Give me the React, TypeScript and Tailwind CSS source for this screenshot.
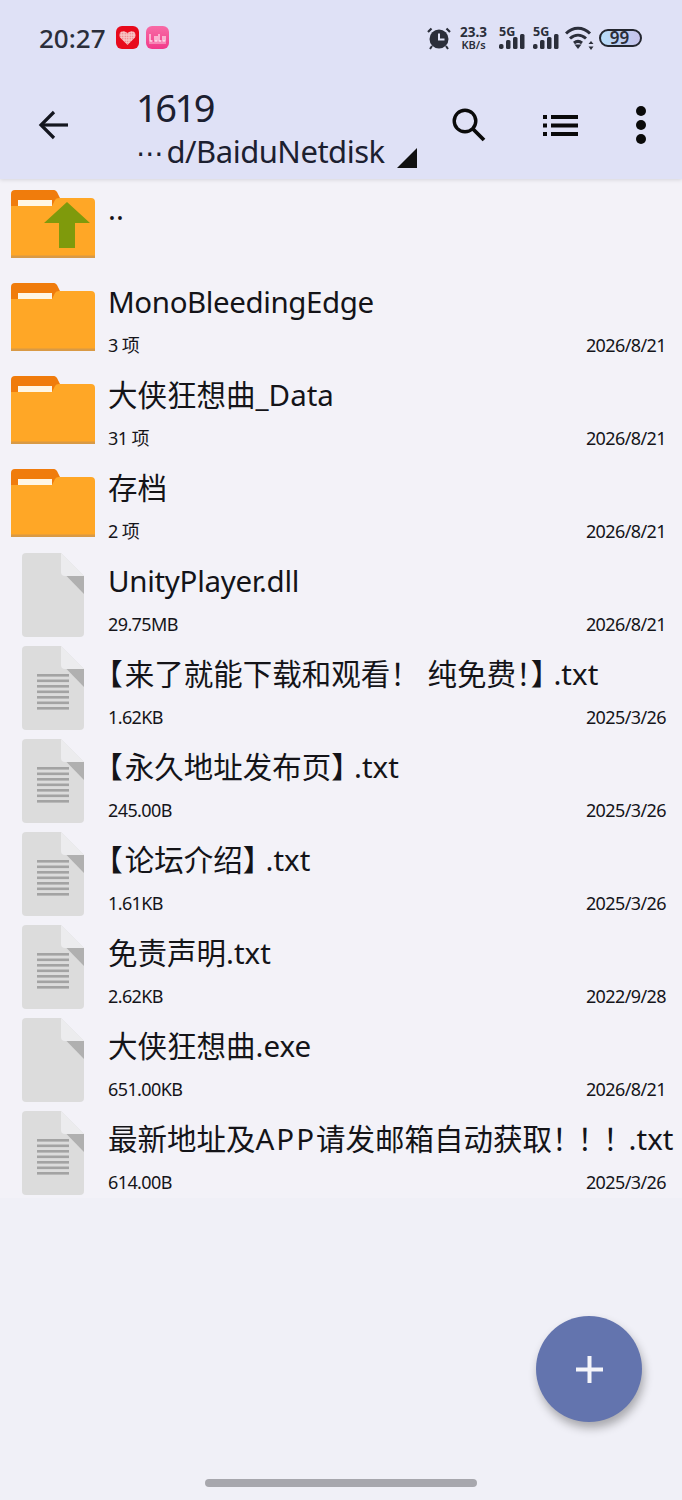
import type { ReactNode } from "react";

type Kind = "up" | "folder" | "blank" | "text";
type Row = { kind: Kind; name: ReactNode; info?: string; date?: string };

// half-width punctuation, the phone's font trims these
function Open() {
  return <span className="mr-[2px] [font-feature-settings:'halt']">【</span>;
}

function Close() {
  return <span className="mr-[8px] [font-feature-settings:'halt']">】</span>;
}

const rows: Row[] = [
  { kind: "up", name: ".." },
  {
    kind: "folder",
    name: <span className="tracking-[-0.4px]">MonoBleedingEdge</span>,
    info: "3 项",
    date: "2026/8/21",
  },
  { kind: "folder", name: "大侠狂想曲_Data", info: "31 项", date: "2026/8/21" },
  { kind: "folder", name: "存档", info: "2 项", date: "2026/8/21" },
  {
    kind: "blank",
    name: <span className="tracking-[-0.3px]">UnityPlayer.dll</span>,
    info: "29.75MB",
    date: "2026/8/21",
  },
  {
    kind: "text",
    name: (
      <>
        <Open />来了就能下载和观看！ 纯免费<span className="[font-feature-settings:'halt']">！</span><Close />.txt
      </>
    ),
    info: "1.62KB",
    date: "2025/3/26",
  },
  {
    kind: "text",
    name: (
      <>
        <Open />永久地址发布页<Close />.txt
      </>
    ),
    info: "245.00B",
    date: "2025/3/26",
  },
  {
    kind: "text",
    name: (
      <>
        <Open />论坛介绍<Close />.txt
      </>
    ),
    info: "1.61KB",
    date: "2025/3/26",
  },
  { kind: "text", name: "免责声明.txt", info: "2.62KB", date: "2022/9/28" },
  { kind: "blank", name: "大侠狂想曲.exe", info: "651.00KB", date: "2026/8/21" },
  {
    kind: "text",
    name: (
      <>
        最新地址及<span className="tracking-[2px]">APP</span>请发邮箱自动获取<span className="tracking-[-4px]">！！！</span>.txt
      </>
    ),
    info: "614.00B",
    date: "2025/3/26",
  },
];

function FolderIcon({ up }: { up?: boolean }) {
  return (
    <svg width="84" height="68" viewBox="0 0 84 68">
      <path d="M0 4a4 4 0 0 1 4-4h38a4 4 0 0 1 4 2l3 6v10H0z" fill="#f07c0c" />
      <rect x="7" y="10" width="34" height="6" fill="#fff6e4" />
      <path d="M0 68V16h41l3-6q1-2 4-2h32a4 4 0 0 1 4 4v56z" fill="#ffa726" />
      <rect x="0" y="65.500" width="84" height="2.500" fill="#d99a45" />
      {up && <path d="M56 12l23 21H64v25H48V33H33z" fill="#7f9a0c" />}
    </svg>
  );
}

function FileIcon({ lines }: { lines?: boolean }) {
  return (
    <svg width="62" height="84" viewBox="0 0 62 84">
      <path d="M4 0h35l23 23v57a4 4 0 0 1-4 4H4a4 4 0 0 1-4-4V4a4 4 0 0 1 4-4z" fill="#dcdcdc" />
      <path d="M39 0l23 23H43a4 4 0 0 1-4-4z" fill="#ececee" />
      <path d="M44.500 23H62v18z" fill="#b0b0b0" />
      {lines && (
        <g fill="#a3a3a3">
          <rect x="15" y="28" width="32" height="2.600" />
          <rect x="15" y="33.500" width="32" height="2.600" />
          <rect x="15" y="39" width="32" height="2.600" />
          <rect x="15" y="44.500" width="32" height="2.600" />
          <rect x="15" y="50" width="32" height="2.600" />
          <rect x="15" y="55.500" width="32" height="2.600" />
          <rect x="15" y="61" width="32" height="2.600" />
        </g>
      )}
    </svg>
  );
}

function Signal() {
  return (
    <div className="relative h-[22px] w-[26px]">
      <span className="absolute -top-[2px] left-0 text-[12.500px] leading-[14px] font-bold">5G</span>
      <svg width="26" height="15" viewBox="0 0 26 15" fill="#2b2e3a" className="absolute bottom-0 left-0">
        <rect x="0" y="10" width="4.500" height="5" rx="1.800" />
        <rect x="7" y="6" width="4.500" height="9" rx="1.500" />
        <rect x="14" y="3" width="4.500" height="12" rx="1.500" />
        <rect x="21" y="0" width="4.500" height="15" rx="1.500" />
      </svg>
    </div>
  );
}

function StatusIcons() {
  return (
    <div className="flex items-center text-[#2b2e3a]">
      <svg width="24" height="24" viewBox="0 0 24 24" className="mr-[9px]">
        <circle cx="12" cy="13" r="9.500" fill="#2b2e3a" />
        <path d="M12 7.500V13.500h5.500" stroke="#dfe1f6" strokeWidth="2" fill="none" />
        <path d="M1 6l3.500-3.500M23 6l-3.500-3.500" stroke="#2b2e3a" strokeWidth="2.200" />
        <path d="M5 20l-2 3M19 20l2 3" stroke="#2b2e3a" strokeWidth="2" />
      </svg>
      <div className="mr-[12px] flex w-[27px] flex-col items-center font-bold whitespace-nowrap">
        <span className="text-[13.500px] leading-[13px]">23.3</span>
        <span className="text-[11px] leading-[11px] font-semibold">KB/s</span>
      </div>
      <div className="mr-[8px]">
        <Signal />
      </div>
      <div className="mr-[6px]">
        <Signal />
      </div>
      <svg width="29" height="24" viewBox="0 0 29 24" className="mr-[5px]" fill="none" stroke="#2b2e3a" strokeWidth="3">
        <path d="M1 7.500c7-7 17-7 24 0" />
        <path d="M5 12.500c5-4.500 11-4.500 16 0" />
        <path d="M9 17c2.800-2.300 5.200-2.300 8 0" />
        <path d="M9.500 18.500h7l-3.500 4.500z" fill="#2b2e3a" stroke="none" />
        <path d="M26 15l2.500 3h-5zM26 24l2.500-3.500h-5z" fill="#2b2e3a" stroke="none" />
      </svg>
      <div className="flex h-[18px] w-[43px] items-center justify-center rounded-[9px] border-2 border-[#23262f] bg-gradient-to-r from-[#b7defb] to-[#c6c2ea] pr-[2px] text-[17px] leading-none font-semibold">
        99
      </div>
    </div>
  );
}

function FileRow({ row }: { row: Row }) {
  const isFolder = row.kind === "folder" || row.kind === "up";
  return (
    <div className="relative flex h-[93px] items-start">
      <div className={isFolder ? "mt-[8px] ml-[11px] w-[97px]" : "mt-[-1px] ml-[22px] w-[86px]"}>
        {isFolder ? <FolderIcon up={row.kind === "up"} /> : <FileIcon lines={row.kind === "text"} />}
      </div>
      <div className="mt-[7px] min-w-0 flex-1">
        <div className="h-[40px] text-[29.500px] leading-[40px] font-normal whitespace-nowrap text-[#141418]">{row.name}</div>
        {row.info && (
          <div className="mt-[11px] flex items-center justify-between pr-[16px] text-[18px] leading-[24px] font-normal tracking-[-0.6px] text-[#15151a]">
            <span>{row.info}</span>
            <span>{row.date}</span>
          </div>
        )}
      </div>
    </div>
  );
}

export default function App() {
  return (
    <div className="relative h-[1500px] w-[682px] overflow-hidden bg-[#f0f0f7] font-['Noto_Sans','Noto_Sans_CJK_SC',sans-serif]">
      <header className="relative z-10 h-[179px] bg-[#dfe1f6] shadow-[0_1px_4px_rgba(0,0,0,0.12)]">
        <div className="flex h-[75px] items-center justify-between pr-[40px] pl-[39px]">
          <div className="flex items-center">
            <span className="text-[26px] leading-none font-medium text-[#2b2e3a]">20:27</span>
            <div className="ml-[10px] flex h-[23px] w-[23px] items-center justify-center rounded-[6px] bg-[#e80a1c]">
              <svg width="17" height="15" viewBox="0 0 17 15">
                <defs>
                  <pattern id="heart-dots" width="2.500" height="2.500" patternUnits="userSpaceOnUse">
                    <rect width="2.500" height="2.500" fill="#f8c6c6" />
                    <circle cx="1.250" cy="1.250" r="0.700" fill="#ec6a74" />
                  </pattern>
                </defs>
                <path d="M8.500 15L1 7.500C-1 3 3-1 8.500 3c5.500-4 9.500 0 7.500 4.500z" fill="url(#heart-dots)" />
              </svg>
            </div>
            <div className="ml-[7px] flex h-[23px] w-[23px] items-center justify-center rounded-[6px] bg-gradient-to-b from-[#f76aa6] to-[#f2388a]">
              <svg width="19" height="12" viewBox="0 0 19 12" fill="none" stroke="#fde3ee" strokeWidth="1.300">
                <path d="M2 2v7h2.500M7 4v5h2V4M11 2v7h2.500M15 4v5h2V4" />
                <path d="M1 11h17" strokeWidth="0.800" />
              </svg>
            </div>
          </div>
          <StatusIcons />
        </div>
        <div className="flex h-[103px] items-start">
          <button className="mt-[35px] ml-[38px] h-[30px] w-[30px] shrink-0">
            <svg width="32" height="30" viewBox="0 0 32 30" fill="none" stroke="#14161f" strokeWidth="3.200">
              <path d="M30 15H3" />
              <path d="M16 2L3 15l13 13" />
            </svg>
          </button>
          <div className="relative ml-[68px] w-[290px]">
            <div className="mt-[10px] text-[38px] leading-[44px] tracking-[-2.500px] text-[#1c2030]">1619</div>
            <div className="mt-[2px] text-[31px] leading-[40px] font-normal tracking-[-0.5px] whitespace-nowrap text-[#1c2030]">
              <span className="mr-[3px] font-['DejaVu_Sans'] text-[28px]">⋯</span>d/BaiduNetdisk
            </div>
            <div className="absolute top-[73px] left-[261px] h-0 w-0 border-b-[20px] border-l-[20px] border-b-[#111] border-l-transparent" />
          </div>
          <svg width="36" height="36" viewBox="0 0 36 36" className="mt-[32px] ml-[25px]" fill="none" stroke="#0a0a0a" strokeWidth="3.400">
            <circle cx="14" cy="14" r="10.800" />
            <path d="M22 22l11 11" strokeWidth="3.800" />
          </svg>
          <svg width="36" height="22" viewBox="0 0 36 22" className="mt-[40px] ml-[56px]" fill="#0a0a0a">
            <rect x="0" y="0" width="4" height="4" />
            <rect x="8" y="0" width="27" height="4" />
            <rect x="0" y="8.500" width="4" height="4" />
            <rect x="8" y="8.500" width="27" height="4" />
            <rect x="0" y="17" width="4" height="4" />
            <rect x="8" y="17" width="27" height="4" />
          </svg>
          <svg width="12" height="38" viewBox="0 0 12 38" className="mt-[31px] ml-[56px]" fill="#0a0a0a">
            <circle cx="6" cy="5" r="5" />
            <circle cx="6" cy="19" r="5" />
            <circle cx="6" cy="33" r="5" />
          </svg>
        </div>
      </header>
      <div className="h-[1019px] overflow-hidden bg-[#f3f2f8] pt-[3px]">
        {rows.map((row, i) => (
          <FileRow key={i} row={row} />
        ))}
      </div>
      <button className="absolute top-[1316px] left-[536px] flex h-[106px] w-[106px] items-center justify-center rounded-full bg-[#6374ae] shadow-[2px_6px_10px_rgba(0,0,0,0.3)]">
        <svg width="27" height="27" viewBox="0 0 27 27" fill="#f5f5fa">
          <rect x="0" y="11.500" width="27" height="4" />
          <rect x="11.500" y="0" width="4" height="27" />
        </svg>
      </button>
      <div className="absolute top-[1479px] left-[205px] h-[8px] w-[272px] rounded-full bg-[#a7a7ad]" />
    </div>
  );
}
